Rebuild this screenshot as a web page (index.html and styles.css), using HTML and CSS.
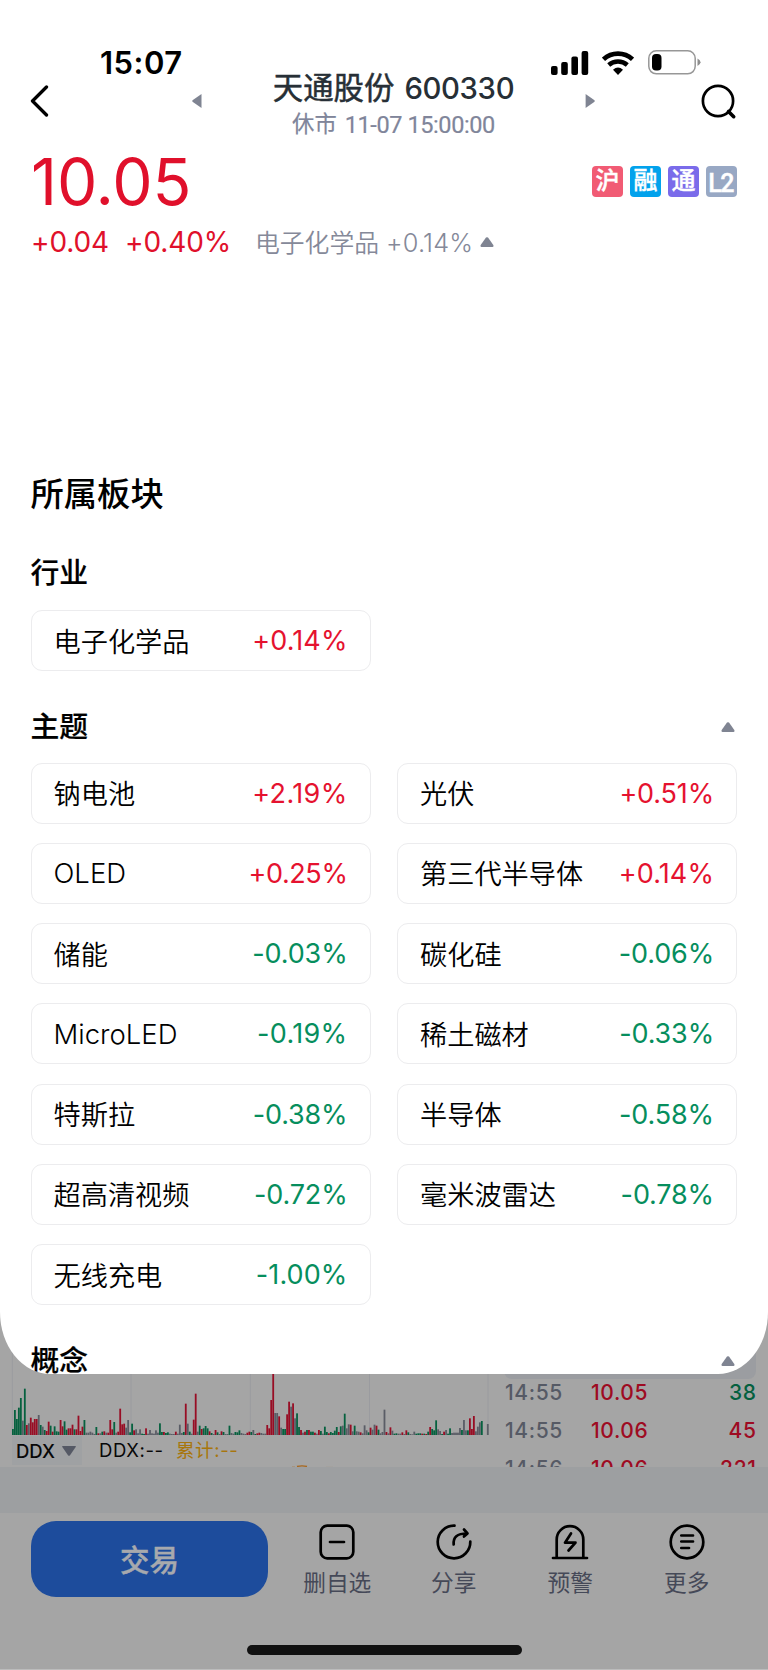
FILE: index.html
```html
<!DOCTYPE html>
<html lang="zh-CN">
<head>
<meta charset="utf-8">
<title>天通股份 600330</title>
<link rel="stylesheet" href="styles.css">
</head>
<body>
<div class="screen">
  <main class="sheet">
    <div class="status">
      <span class="clock">15:07</span>
      <div class="status-icons">
        <svg class="signal" width="38" height="24" viewBox="0 0 38 24"><rect x="0" y="15" width="6.6" height="9" rx="2"/><rect x="10.2" y="11" width="6.6" height="13" rx="2"/><rect x="20.4" y="5.5" width="6.6" height="18.500" rx="2"/><rect x="30.600" y="0" width="6.600" height="24" rx="2"/></svg>
        <svg class="wifi" width="32" height="24" viewBox="0 0 32 24" fill="none" stroke="#000"><path d="M1.500 8.300A21.500 21.500 0 0 1 30.500 8.300" stroke-width="4.600"/><path d="M6.700 14A14 14 0 0 1 25.300 14" stroke-width="4.400"/><path d="M11 18.700Q16 14.300 21 18.700L16 24Z" fill="#000" stroke="none"/></svg>
        <svg class="battery" width="53" height="25" viewBox="0 0 53 25"><rect x=".8" y=".8" width="46.400" height="23" rx="7.500" fill="none" stroke="#979797" stroke-width="1.500"/><rect x="4" y="4" width="9.500" height="16.500" rx="4"/><path d="M49.500 8.500Q52.500 10 52.500 12.300T49.500 16Z" fill="#8e8e8e"/></svg>
      </div>
    </div>
    <header class="nav">
      <svg class="nav-back" width="20" height="32" viewBox="0 0 20 32" fill="none" stroke="#000" stroke-width="3.300" stroke-linecap="round" stroke-linejoin="round"><path d="M16.500 2 2.500 16l14 14"/></svg>
      <svg class="nav-arrow" width="10" height="14" viewBox="0 0 10 14"><path d="M9.500 0V14L0.500 7.800Q0 7 .5 6.200Z"/></svg>
      <div class="nav-title">
        <h1 class="name"><span class="name-cn">天通股份</span><span class="name-code">600330</span></h1>
        <p class="session"><span class="session-cn">休市</span><span class="session-time">11-07 15:00:00</span></p>
      </div>
      <svg class="nav-arrow" width="10" height="14" viewBox="0 0 10 14"><path d="M.6 0V14L9.500 7.800Q10 7 9.500 6.200Z"/></svg>
      <svg class="nav-search" width="36" height="36" viewBox="0 0 36 36" fill="none" stroke="#000" stroke-linecap="round"><circle cx="17" cy="17" r="15.100" stroke-width="2.700"/><path d="M27.500 27.500 32.700 32.700" stroke-width="3.600"/></svg>
    </header>
    <section class="quote">
      <div class="price-row">
        <span class="price">10.05</span>
        <div class="badges"><span class="badge badge-hu">沪</span><span class="badge badge-rong">融</span><span class="badge badge-tong">通</span><span class="badge badge-l2">L2</span></div>
      </div>
      <div class="change-row">
        <span class="change-abs">+0.04</span><span class="change-pct">+0.40%</span><span class="sector">电子化学品</span><span class="sector-pct">+0.14%</span>
        <svg class="up" width="14" height="10" viewBox="0 0 14 10"><path d="M6 .6Q7 -.2 8 .6L13.300 8Q14 10 12.500 10H1.500Q0 10 .7 8Z"/></svg>
      </div>
    </section>
    <section class="boards">
      <h2 class="boards-title">所属板块</h2>
      <div class="group-head group-first"><h3>行业</h3></div>
      <div class="chips">
        <div class="chip"><span>电子化学品</span><b class="rise wide">+0.14%</b></div>
      </div>
      <div class="group-head group-theme"><h3>主题</h3><svg class="up" width="14" height="10" viewBox="0 0 14 10"><path d="M6 .6Q7 -.2 8 .6L13.300 8Q14 10 12.500 10H1.500Q0 10 .7 8Z"/></svg></div>
      <div class="chips">
        <div class="chip"><span>钠电池</span><b class="rise wider">+2.19%</b></div>
        <div class="chip"><span>光伏</span><b class="rise">+0.51%</b></div>
        <div class="chip"><span class="latin">OLED</span><b class="rise tight">+0.25%</b></div>
        <div class="chip"><span>第三代半导体</span><b class="rise wide">+0.14%</b></div>
        <div class="chip"><span>储能</span><b class="fall">-0.03%</b></div>
        <div class="chip"><span>碳化硅</span><b class="fall">-0.06%</b></div>
        <div class="chip"><span class="latin">MicroLED</span><b class="fall wider">-0.19%</b></div>
        <div class="chip"><span>稀土磁材</span><b class="fall">-0.33%</b></div>
        <div class="chip"><span>特斯拉</span><b class="fall">-0.38%</b></div>
        <div class="chip"><span>半导体</span><b class="fall">-0.58%</b></div>
        <div class="chip"><span>超高清视频</span><b class="fall">-0.72%</b></div>
        <div class="chip"><span>毫米波雷达</span><b class="fall">-0.78%</b></div>
        <div class="chip"><span>无线充电</span><b class="fall wide">-1.00%</b></div>
      </div>
      <div class="group-head group-concept"><h3>概念</h3><svg class="up" width="14" height="10" viewBox="0 0 14 10"><path d="M6 .6Q7 -.2 8 .6L13.300 8Q14 10 12.500 10H1.500Q0 10 .7 8Z"/></svg></div>
    </section>
  </main>

  <section class="market">
    <div class="chart-pane">
      <svg id="volume" width="490" height="136" viewBox="0 1300 490 136"></svg>
      <div class="indicator">
        <span class="indicator-pick">DDX<svg width="14" height="10" viewBox="0 0 14 10"><path d="M.5 0H13.500Q14 .4 13.700 1L8 9.200Q7 10.200 6 9.200L.3 1Q0 .4 .5 0Z"/></svg></span>
        <span class="indicator-value">DDX:--</span>
        <span class="indicator-sum">累计:--</span>
      </div>
      <svg class="line-tip" width="490" height="3" viewBox="0 0 490 3"><path d="M292 2.500h3M297 1.500Q302 .2 307 1.500" stroke="#a9671c" stroke-width="1.300" fill="none"/><path d="M326 2.300h7M424 2.500h63" stroke="#a8977f" stroke-width=".7"/></svg>
    </div>
    <div class="ticks">
      <div class="ticks-band"></div>
      <div class="tick"><span class="tick-time">14:55</span><span class="tick-price">10.05</span><span class="tick-vol sell">38</span></div>
      <div class="tick"><span class="tick-time">14:55</span><span class="tick-price">10.06</span><span class="tick-vol">45</span></div>
      <div class="tick"><span class="tick-time">14:56</span><span class="tick-price">10.06</span><span class="tick-vol">221</span></div>
    </div>
  </section>

  <div class="gap-band"></div>

  <footer class="toolbar">
    <div class="actions">
      <span class="trade">交易</span>
      <div class="action">
        <svg width="38" height="36" viewBox="0 0 38 36"><rect x="2.700" y="1.700" width="32.600" height="32.600" rx="6.500"/><path d="M12 18H26"/></svg>
        <span>删自选</span>
      </div>
      <div class="action">
        <svg width="38" height="36" viewBox="0 0 38 36"><path d="M19.500 1.700A16.300 16.300 0 1 0 35.300 17.500"/><path d="M18.700 20.500C18 13 22 9.500 32 9.500M29 5.500 32.500 9.500 29 12.500"/></svg>
        <span>分享</span>
      </div>
      <div class="action">
        <svg width="38" height="36" viewBox="0 0 38 36"><path d="M2 34H36M5.700 33.500V15.500A13.300 13.300 0 0 1 32.300 15.500V33.500"/><path d="M20 9.500 14 18.700H24.500L17.500 26.500"/></svg>
        <span>预警</span>
      </div>
      <div class="action">
        <svg width="38" height="36" viewBox="0 0 38 36"><circle cx="19" cy="18" r="16.300"/><path d="M13.300 11.500H25M13.300 17.500H25M13.300 24H21"/></svg>
        <span>更多</span>
      </div>
    </div>
    <div class="home-indicator"></div>
  </footer>
</div>
<script src="chart.js"></script>
</body>
</html>
```
FILE: styles.css
```css
* { box-sizing: border-box; }
body { margin: 0; background: #a5a5a5; font-family: Inter, "Noto Sans CJK SC", sans-serif; }
h1, h2, h3, p { margin: 0; font-weight: 500; }
svg { display: block; flex: none; }
.screen { width: 768px; height: 1670px; overflow: hidden; background: #a5a5a5; border-bottom: 1px solid #bcbcbc; }
.sheet { position: relative; z-index: 1; height: 1374px; overflow: hidden; background: #fff; border-radius: 0 0 50px 50px / 0 0 62px 62px; }

.status { display: flex; justify-content: space-between; align-items: center; height: 70px; padding: 55px 67px 0 100px; }
.clock { font-size: 31px; font-weight: 600; letter-spacing: .5px; line-height: 30px; }
.status-icons { display: flex; align-items: center; }
.wifi { margin-left: 13px; }
.battery { margin-left: 14px; }

.nav { display: grid; grid-template-columns: 162px 10px 383px 10px 1fr; align-items: center; height: 63px; padding: 0 31px 0 30px; }
.nav-arrow, .up { fill: #7f8492; }
.nav-arrow { margin-top: -1px; }
.nav-back { margin-top: -1px; }
.nav-title { height: 63px; color: #272f36; white-space: nowrap; }
.nav-search { justify-self: end; }
.name { display: flex; justify-content: center; gap: 10px; line-height: 36px; }
.name-cn { font-size: 30.400px; font-weight: 400; -webkit-text-stroke: .5px; }
.name-code { font-size: 29.300px; letter-spacing: -0.35px; padding-top: 1px; }
.session { display: flex; justify-content: center; gap: 8px; margin-top: 3px; line-height: 28px; color: #80859a; font-size: 22.300px; font-weight: 400; -webkit-text-stroke: .2px; }
.session-time { font-family: Roboto, sans-serif; font-size: 23.500px; letter-spacing: -.4px; padding-top: 1px; }

.quote { padding: 14px 31px 0 31px; }
.price-row { display: flex; justify-content: space-between; height: 70px; }
.price { color: #e0102b; font-size: 64px; line-height: 70px; letter-spacing: -0.100px; }
.badges { display: flex; gap: 7px; padding-top: 19px; }
.badge { width: 31px; height: 31px; border-radius: 4px; color: #fff; font-size: 24px; font-weight: 500; line-height: 30px; text-align: center; -webkit-text-stroke: .4px; }
.badge-hu { background: #f15b74; }
.badge-rong { background: #02a2ec; }
.badge-tong { background: #7a6bea; }
.badge-l2 { background: #98a8c4; font-family: Roboto, sans-serif; font-size: 25px; line-height: 35px; letter-spacing: -1.500px; padding-right: 2px; }
.change-row { display: flex; align-items: center; height: 50px; color: #e0102b; font-size: 28px; white-space: nowrap; }
.change-abs { width: 94px; letter-spacing: -0.100px; }
.change-pct { width: 130px; letter-spacing: -0.100px; }
.sector { width: 131px; margin-top: -2px; color: #858999; font-size: 24.800px; font-weight: 350; }
.sector-pct { width: 94px; color: #858999; font-size: 25.300px; font-weight: 300; letter-spacing: .2px; }

.boards { padding: 0 30.500px; }
.boards-title { margin-top: 196.500px; height: 60px; line-height: 60px; font-size: 33.300px; }
.group-head { display: flex; align-items: center; justify-content: space-between; height: 40px; padding: 0 2.500px 0 0; }
.group-head h3 { font-size: 28.800px; line-height: 40px; -webkit-text-stroke: .2px; }
.group-first { margin-top: 29.500px; margin-bottom: 17px; }
.group-theme { margin-top: 36px; margin-bottom: 15.500px; }
.group-concept { margin-top: 36px; }
.chips { display: grid; grid-template-columns: 340px 340px; gap: 19.300px 26.500px; }
.chip { display: flex; align-items: center; justify-content: space-between; height: 61px; padding: 0 22px; border: 1px solid #ececee; border-radius: 11px; font-size: 27.200px; color: #000; white-space: nowrap; }
.chip span { margin-top: -2px; font-weight: 350; }
.chip b { font-size: 27px; font-weight: 400; letter-spacing: -0.150px; }
.chip b.tight { letter-spacing: -0.400px; }
.chip b.wide { letter-spacing: .100px; }
.chip b.wider { letter-spacing: .350px; }
.chip .latin { margin-top: 0; font-size: 27.500px; font-weight: 300; }
.rise { color: #e5122f; }
.fall { color: #068e5d; }

.market { display: flex; height: 167px; margin-top: -74px; overflow: hidden; }
.chart-pane { width: 490px; }
.indicator { display: flex; height: 29px; padding-left: 12px; font-size: 18.500px; line-height: 28px; color: #080808; white-space: nowrap; }
.indicator-pick { display: flex; align-items: center; gap: 7px; width: 70px; padding-left: 4px; background: #9fa1a3; font-weight: 500; }
.indicator-pick svg { fill: #555965; }
.indicator-value { width: 94px; padding-left: 17px; letter-spacing: .600px; }
.indicator-sum { color: #a8760d; letter-spacing: .6px; }
.ticks { width: 278px; }
.ticks-band { width: 252px; height: 79px; margin-left: 14px; border-radius: 8px; background: #9b9da1; }
.tick { display: flex; height: 38.200px; padding: 0 11.500px 0 15px; font-size: 21px; font-weight: 550; line-height: 27px; color: #9e0b22; letter-spacing: .6px; }
.tick-time { width: 86px; color: #565a65; }
.tick-vol { margin-left: auto; }
.sell { color: #04603f; }
.gap-band { height: 46px; background: #9d9fa1; }

.actions { display: flex; height: 92px; padding: 8px 23px 0 31px; }
.trade { width: 237px; height: 76px; margin-right: 11px; border-radius: 25px; background: #1d4c9c; color: #a7a9ad; font-size: 29.500px; font-weight: 500; line-height: 79px; text-align: center; -webkit-text-stroke: .4px; }
.action { display: flex; flex-direction: column; align-items: center; width: 116.500px; padding-top: 3px; color: #454958; font-size: 22.700px; line-height: 30px; }
.action svg { fill: none; stroke: #000; stroke-width: 2.700; stroke-linecap: round; stroke-linejoin: round; }
.action span { margin-top: 8px; }
.home-indicator { width: 275px; height: 10px; margin: 39.500px auto 0; border-radius: 5px; background: #111; }
```
FILE: chart.js
```js
// Volume bars: colour letter (g fall, r rise, k flat) plus height in thirds of a pixel.
const bars = `g18 g75 g48 g82 g111 k43 g139 r30 k35 r52 r38 r48 r48 k60 g30 k25 g15 r12 r40 g28
r10 g26 g11 g10 r45 r26 g41 g16 r20 r20 r31 g17 r17 r58 r12 r25 g45 k7 k7 k10
k7 k3 g24 r5 k5 g10 r11 k7 r7 r45 r17 g39 k7 r10 r79 r32 r34 k22 k45 g8
g34 r14 k17 k5 k17 g4 g3 r20 k4 k15 k5 k4 k14 k7 g35 g9 r9 g6 g8 k4
k3 k3 r10 k4 k31 k6 g9 r94 k34 g10 k4 r46 r124 k10 g28 r18 g20 g27 g20 r11
g6 k3 r15 g8 k3 r11 g9 k3 k3 g28 k6 k4 g9 g8 g14 k6 k4 k3 r7 r10
g9 k15 g3 r5 r7 k6 k4 k4 r30 r20 r105 r190 k66 k66 r56 k22 g18 g18 r62 r100
k85 r95 k50 g65 g24 r15 k7 r10 g15 r15 g10 g10 r7 k4 r15 g12 k4 g25 g9 r5
g9 g6 g13 g24 r9 g26 k28 g64 k20 k32 r31 k11 g28 k11 k10 r8 k5 k29 k14 g8
r22 k16 k31 r28 g16 k5 k9 k76 r9 k5 r23 k13 g4 g5 k4 k4 r8 k3 r14 g8
k3 k2 k10 g4 g5 g5 r4 g4 r3 g10 r24 g18 g14 g44 k17 k12 g3 r10 k15 g4
g20 k6 k7 k7 k7 k21 g15 k45 k14 g14 r50 r18 r57 k11 k25 k38 g42 k0 k0 k33`.split(/\s+/);

const colours = { g: '#06613f', r: '#980d24', k: '#5a5d66' };
const step = 1.987;
const base = 1435;
let markup = '';
for (const x of [12.3, 131, 250.3, 369.5, 488]) {
  markup += `<path d="M${x} 1300V${base}" stroke="#9a9b9f"/>`;
}
bars.forEach((bar, i) => {
  const h = Number(bar.slice(1)) / 3;
  markup += `<rect x="${(12 + i * step).toFixed(2)}" y="${(base - h).toFixed(2)}" width="1.8" height="${h.toFixed(2)}" fill="${colours[bar[0]]}"/>`;
});
document.getElementById('volume').innerHTML = markup;
```
